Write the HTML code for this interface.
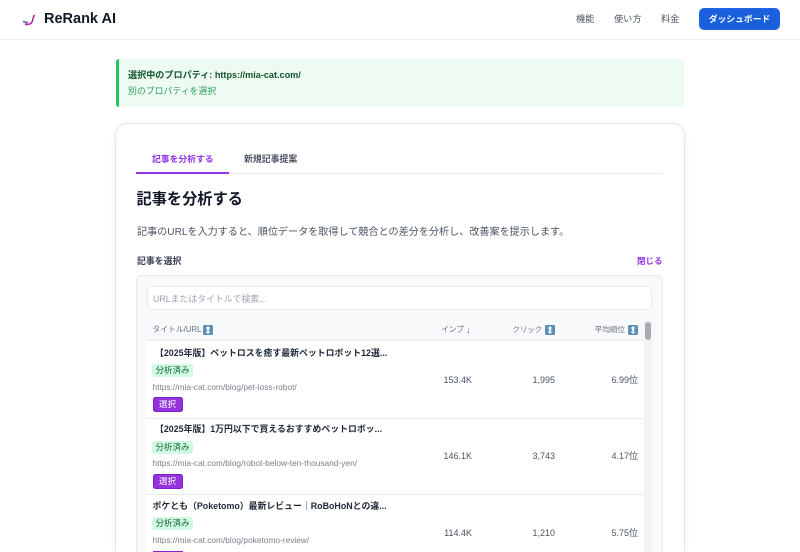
<!DOCTYPE html>
<html lang="ja"><head><meta charset="utf-8"><title>ReRank AI</title>
<style>
*{box-sizing:border-box}
html,body{margin:0;padding:0;background:#fff;width:800px;height:552px;overflow:hidden}
body{font-family:"Liberation Sans","Noto Sans CJK JP",sans-serif;color:#111827}
#w{position:absolute;left:0;top:0;width:800px;height:552px;overflow:hidden;background:#fff}
.a{position:absolute;white-space:nowrap;line-height:1}
.r{text-align:right}
.badge{position:absolute;left:152px;width:41px;height:13px;background:#d1fae5;border-radius:3px;font-size:8.5px;line-height:13px;text-align:center;color:#166534}
.btn{position:absolute;left:152.500px;width:30px;height:15px;background:#9333d9;border:1px solid #7e22ce;border-radius:2.500px;font-size:8.500px;line-height:13px;text-align:center;color:#fff}
.t{font-size:8.900px;font-weight:700;color:#1f2937}
.u{font-size:8.350px;color:#7a818c}
.n{font-size:9px;color:#4b5563}
.h{font-size:7.700px;color:#6b7280}
.ic{position:absolute;width:10px;height:10px;background:#5b8fb5;border-radius:1.500px}
.line{position:absolute;left:147px;width:497px;height:1px;background:#e9ebef}
</style></head>
<body><div id="w">
<div class="a" style="left:0;top:39px;width:800px;height:1px;background:#eceef1"></div>
<svg class="a" style="left:20px;top:12px" width="18" height="16" viewBox="0 0 18 16"><path d="M3 9.500 8 11" stroke="#8d7cc4" stroke-width="2.400" fill="none"/><path d="M5 12.300C8 13 11 12 12 10 13 8 13 5 14.500 3" stroke="#b5259a" stroke-width="1.500" fill="none"/></svg>
<div class="a" style="left:44px;top:11px;font-size:14.500px;line-height:17px;font-weight:700;color:#111827">ReRank AI</div>
<div class="a" style="left:576px;top:14px;font-size:9.200px;line-height:11px;color:#4b5563">機能</div>
<div class="a" style="left:614px;top:14px;font-size:9.200px;line-height:11px;color:#4b5563">使い方</div>
<div class="a" style="left:661px;top:14px;font-size:9.200px;line-height:11px;color:#4b5563">料金</div>
<div class="a" style="left:699px;top:8px;width:81px;height:22px;background:#1a5fdc;border:1px solid #2563eb;border-radius:5px;color:#fff;font-size:8.800px;font-weight:700;line-height:20px;text-align:center">ダッシュボード</div>

<div class="a" style="left:116px;top:59px;width:568px;height:48px;background:#edfbf2;border-left:3px solid #22c55e;border-radius:3px"></div>
<div class="a" style="left:128px;top:70px;font-size:9.100px;line-height:11px;font-weight:700;color:#14532d">選択中のプロパティ: https://mia-cat.com/</div>
<div class="a" style="left:128px;top:85.500px;font-size:8.900px;line-height:11px;color:#2f9e5f">別のプロパティを選択</div>

<div class="a" style="left:115px;top:123px;width:570px;height:429px;background:#fff;border:1px solid #e9e3f5;border-bottom:0;border-radius:12px 12px 0 0;box-shadow:0 1px 6px rgba(80,60,140,.08)"></div>
<div class="a" style="left:136px;top:173px;width:527px;height:1px;background:#eeeef2"></div>
<div class="a" style="left:136px;top:172px;width:93px;height:1.500px;background:#9333ea"></div>
<div class="a" style="left:152px;top:153.500px;font-size:8.800px;line-height:11px;font-weight:700;color:#9333ea">記事を分析する</div>
<div class="a" style="left:244px;top:153.500px;font-size:8.900px;line-height:11px;font-weight:700;color:#4b5563">新規記事提案</div>
<div class="a" style="left:136.500px;top:189.500px;font-size:15.200px;line-height:20px;font-weight:700;color:#111827">記事を分析する</div>
<div class="a" style="left:137px;top:226px;font-size:10.100px;line-height:14px;color:#4b5563">記事のURLを入力すると、順位データを取得して競合との差分を分析し、改善案を提示します。</div>
<div class="a" style="left:137px;top:256px;font-size:8.900px;line-height:11px;font-weight:700;color:#374151">記事を選択</div>
<div class="a" style="left:637px;top:256px;font-size:8.500px;line-height:11px;font-weight:700;color:#9333ea">閉じる</div>

<div class="a" style="left:136px;top:275px;width:527px;height:277px;background:#f8f9fb;border:1px solid #e8eaee;border-bottom:0;border-radius:6px 6px 0 0"></div>
<div class="a" style="left:147px;top:286px;width:505px;height:24px;background:#fff;border:1px solid #e8eaee;border-radius:5px"></div>
<div class="a" style="left:153px;top:292.500px;font-size:8.850px;line-height:12px;color:#9ca3af">URLまたはタイトルで検索...</div>

<div class="a" style="left:147px;top:341px;width:497px;height:211px;background:#fff"></div>
<div class="a" style="left:147px;top:339px;width:497px;height:2px;background:#eff0f3"></div>
<div class="a" style="left:644px;top:321px;width:8px;height:231px;background:#f4f4f6"></div>
<div class="a" style="left:645px;top:322px;width:6px;height:18px;background:#a8abb1;border-radius:3px"></div>

<div class="a h" style="left:152.500px;top:325px;line-height:10px;font-size:7.800px">タイトル/URL</div>
<svg class="ic" style="left:203px;top:325px" viewBox="0 0 10 10"><path d="M5 1 7.500 3.500H2.500ZM5 9 7.500 6.500H2.500Z M4 3h2v4H4Z" fill="#fff"/></svg>
<div class="a h r" style="right:336px;top:325px;line-height:10px">インプ</div><div class="a" style="left:466px;top:325px;font-size:9px;line-height:10px;color:#7c3aed">↓</div>
<div class="a h r" style="right:258px;top:325px;line-height:10px;font-size:7.400px">クリック</div>
<svg class="ic" style="left:545px;top:325px" viewBox="0 0 10 10"><path d="M5 1 7.500 3.500H2.500ZM5 9 7.500 6.500H2.500Z M4 3h2v4H4Z" fill="#fff"/></svg>
<div class="a h r" style="right:175px;top:325px;line-height:10px;font-size:7.600px">平均順位</div>
<svg class="ic" style="left:628px;top:325px" viewBox="0 0 10 10"><path d="M5 1 7.500 3.500H2.500ZM5 9 7.500 6.500H2.500Z M4 3h2v4H4Z" fill="#fff"/></svg>

<div class="a t" style="left:155px;top:347px;line-height:12px">【2025年版】ペットロスを癒す最新ペットロボット12選...</div>
<div class="badge" style="top:364px">分析済み</div>
<div class="a u" style="left:152.500px;top:382px;line-height:10px">https://mia-cat.com/blog/pet-loss-robot/</div>
<div class="btn" style="top:397px">選択</div>
<div class="a n r" style="right:328px;top:375px;line-height:10px">153.4K</div>
<div class="a n r" style="right:245px;top:375px;line-height:10px">1,995</div>
<div class="a n r" style="right:162px;top:375px;line-height:10px">6.99位</div>
<div class="line" style="top:417.500px"></div>

<div class="a t" style="left:155px;top:423px;line-height:12px">【2025年版】1万円以下で買えるおすすめペットロボッ...</div>
<div class="badge" style="top:441px">分析済み</div>
<div class="a u" style="left:152.500px;top:458px;line-height:10px">https://mia-cat.com/blog/robot-below-ten-thousand-yen/</div>
<div class="btn" style="top:474px">選択</div>
<div class="a n r" style="right:328px;top:451px;line-height:10px">146.1K</div>
<div class="a n r" style="right:245px;top:451px;line-height:10px">3,743</div>
<div class="a n r" style="right:162px;top:451px;line-height:10px">4.17位</div>
<div class="line" style="top:494px"></div>

<div class="a t" style="left:152.500px;top:500px;line-height:12px">ポケとも（Poketomo）最新レビュー｜RoBoHoNとの違...</div>
<div class="badge" style="top:517px">分析済み</div>
<div class="a u" style="left:152.500px;top:535px;line-height:10px">https://mia-cat.com/blog/poketomo-review/</div>
<div class="a" style="left:152.500px;top:551px;width:30px;height:1px;background:#7e22ce"></div>
<div class="a n r" style="right:328px;top:528px;line-height:10px">114.4K</div>
<div class="a n r" style="right:245px;top:528px;line-height:10px">1,210</div>
<div class="a n r" style="right:162px;top:528px;line-height:10px">5.75位</div>
</div></body></html>
